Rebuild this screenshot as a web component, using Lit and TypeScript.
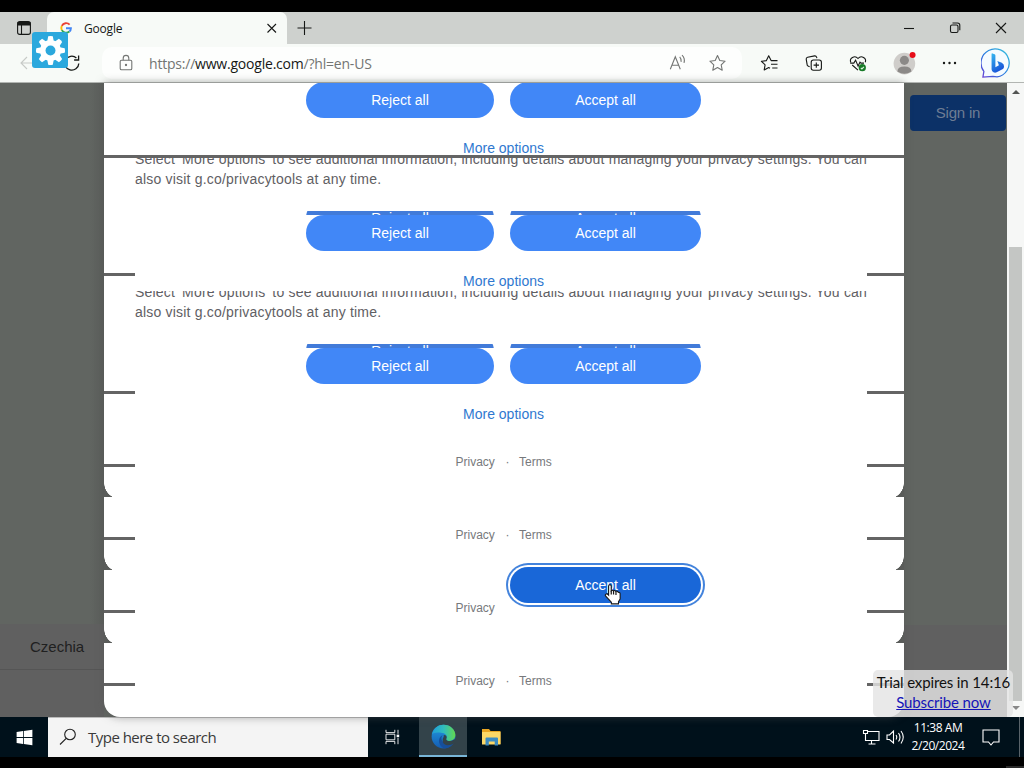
import { css, html, LitElement, svg } from "lit";
import { customElement, property } from "lit/decorators.js";
import { classMap } from "lit/directives/class-map.js";

@customElement("ui-icon")
export class UiIcon extends LitElement {
    @property({ type: String }) name = "";

    private shapes() {
        switch (this.name) {
            case "tabs":
                return svg`<rect x="3.6" y="3.6" width="12.8" height="12.8" rx="2.2"/><path d="M3.6 5h12.8M3.6 6.5h12.8" stroke-width="2.2"/><path d="M7.5 7v9.4"/>`;
            case "close":
                return svg`<path d="M5.500 6l8.500 8.500M14 6l-8.500 8.500"/>`;
            case "plus":
                return svg`<path d="M9.500 3v14M2.500 10h14"/>`;
            case "minimize":
                return svg`<path d="M5 10.5h10"/>`;
            case "restore":
                return svg`<rect x="5.5" y="7" width="7.5" height="7.5" rx="1.5"/><path d="M7.5 5h5q2.3 0 2.3 2.3v5"/>`;
            case "exit":
                return svg`<path d="M5 5l10 10M15 5L5 15"/>`;
            case "back":
                return svg`<path d="M17 10H3.5M9 4l-6 6 6 6"/>`;
            case "reload":
                return svg`<path d="M16.8 10.5a7 7 0 1 1-2.4-5.6M16.6 2.500v4.500h-4.500" stroke-width="1.3"/>`;
            case "lock":
                return svg`<rect x="4.2" y="7.2" width="11.6" height="9.6" rx="1.3"/><path d="M7.2 7.2V5.2a2.8 2.8 0 0 1 5.6 0v2"/><circle cx="10" cy="12" r=".6" fill="currentColor"/>`;
            case "read":
                return svg`<path d="M3.300 16.200L8.300 3.800l5 12.400M5.100 12.200h6.400M12.700 3.800q2 2.200 1.400 5M15 2.200q3.300 3 2 7.600"/>`;
            case "star":
                return svg`<path d="M10.500 2.600l2.300 4.900 5.300.7-3.900 3.700 1 5.300-4.700-2.600-4.700 2.600 1-5.300-3.900-3.700 5.300-.7z" stroke-linejoin="round"/>`;
            case "favorites":
                return svg`<path d="M12.2 7.6h-1.1L8.7 2.8 6.4 7.6l-5 .7 3.7 3.5-.9 5.1 4.5-2.4 1.3.7M11.2 7.6h6.3M11 11.3h6.5M12.2 15h5.3" stroke-linejoin="round"/>`;
            case "collections":
                return svg`<rect x="7.2" y="7" width="10.2" height="10.2" rx="2.2"/><path d="M12.3 9.4v5.4M9.6 12.1H15M5.6 13.8l-1.5-.8q-1-.6-1-1.6L2.2 6.2q-.2-1.6 1.4-2l7-1.3q1.5-.2 2 1.3l.3 1"/>`;
            case "health":
                return svg`<path d="M2.8 9.3C1 5.4 6.7 1.6 10 5.5c3.3-3.9 9-.1 7.2 3.8M2.2 10.100h3.600l1.800-3 2.500 6 1.900-4 1 1h3M4.200 12l5.800 5.200"/><circle cx="14.3" cy="14.7" r="3.6" fill="#187a28" stroke="none"/><path d="M12.8 14.900l1.100 1 2-2.100" stroke="#dff5df"/>`;
            case "dots":
                return svg`<g fill="currentColor" stroke="none"><circle cx="5" cy="10" r="1.2"/><circle cx="10.5" cy="10" r="1.2"/><circle cx="16" cy="10" r="1.2"/></g>`;
            case "profile":
                return svg`<g stroke="none"><circle cx="9.5" cy="10.5" r="9" fill="#cfcdca"/><circle cx="9.5" cy="7.8" r="3.8" fill="#8b8987"/><path d="M3.7 17q0-4 5.800-4t5.800 4q-5.800 4-11.600 0z" fill="#8b8987"/><circle cx="16.300" cy="3.400" r="2.500" fill="#e60d18"/></g>`;
            case "google":
                return svg`<g stroke-width="2.700"><path d="M15.200 5.200A7 7 0 0 0 4 6.900" stroke="#ea4335"/><path d="M4 6.900a7 7 0 0 0 0 6.200" stroke="#fbbc05"/><path d="M4 13.100a7 7 0 0 0 10.800 2" stroke="#34a853"/><path d="M14.800 15.100q2.200-1.900 2.200-4.800h-7" stroke="#4285f4"/></g>`;
            case "bing":
                return svg`<defs><linearGradient id="r" x1="0" y1="1" x2="1" y2="0"><stop stop-color="#6c3fd4"/><stop offset=".45" stop-color="#2878df"/><stop offset="1" stop-color="#38c4de"/></linearGradient><linearGradient id="b" x1="0" y1="0" x2=".5" y2="1"><stop stop-color="#37b8ef"/><stop offset="1" stop-color="#1853d8"/></linearGradient></defs>
                    <path d="M1.200 18.800l.6-3.500A8.800 8.800 0 1 1 10 18.700q-1.200 0-2.600-.3z" stroke="url(#r)" stroke-width=".8" fill="#f5fbff"/><path d="M6.600 4.500q0-.7.6-.5l1.300.5q.5.200.5.800v7.400l2.200-1.300-1-2.700 2.800 1.100q1.600.8 1.400 2.500 0 1-1 1.600l-3.600 1.900q-1 .5-2 0-1.200-.6-1.200-1.900z" fill="url(#b)" stroke="none"/>`;
            case "gear":
                return svg`<g stroke="none" fill="#fff"><circle cx="10" cy="10" r="6.400"/>${[0, 45, 90, 135, 180, 225, 270, 315].map(
                    (a) => svg`<path d="M8 4.500l.6-3.100q1.400-.4 2.800 0l.6 3.100z" transform="rotate(${a} 10 10)"/>`
                )}<circle cx="10" cy="10" r="3" fill="#2ba8dd"/></g>`;
            case "windows":
                return svg`<path d="M1.700 4.200l6.800-1v6.300H1.700zM9.300 3.100L18.300 1.800v7.700h-9zM1.700 10.400h6.800v6.400l-6.800-1zM9.300 10.400h9v7.800l-9-1.300z" fill="#fff" stroke="none"/>`;
            case "search":
                return svg`<circle cx="12" cy="7.500" r="5.300"/><path d="M8.200 11.300L2 17.500"/>`;
            case "taskview":
                return svg`<path d="M2.500 1v3.500h11V1M2.500 19v-3.500h11V19M2.500 6.500h11v7h-11zM17.500 1v5M17.500 11v8"/><path d="M15.800 7h3.200v3.200h-3.200z" fill="#fff" stroke="none"/>`;
            case "edge":
                return svg`<defs><linearGradient id="g" x1="0" y1=".3" x2="1" y2=".3"><stop stop-color="#209ed8"/><stop offset=".5" stop-color="#31bdbd"/><stop offset="1" stop-color="#62d84e"/></linearGradient><linearGradient id="u" x1="0" y1="0" x2="0" y2="1"><stop stop-color="#229be0"/><stop offset="1" stop-color="#145cb2"/></linearGradient></defs>
                    <g stroke="none"><circle cx="10" cy="10" r="9.500" fill="url(#u)"/><path d="M.8 8.200C2.200 3 6 .5 10 .5c5.500 0 9.500 4 9.500 8.200 0 3-2.500 4.800-5 4.800-2 0-3-.8-2.400-1.800C13.500 9.500 11.500 7 8 7 4.500 6.400 2 7 .8 8.200z" fill="url(#g)"/><path d="M9.300 8.800c-2.500 3.200.2 7 3.700 7 2 0 3.800-.7 5.300-1.900l.5.200q-3 5-8 5.400C6 18 4.500 11.500 9.300 8.800z" fill="#164f9c"/><path d="M10.200 8.700q2.600.2 2.300 2.200-.8 1.400.3 2.200 2.600 1.300 5.700-.8l1.500-.8v4l-1.600.100q-2.700 1.500-5.500 1.300-3-.4-3.500-3-.2-2.500.8-4z" fill="#33434a"/></g>`;
            case "folder":
                return svg`<g stroke="none"><path d="M.5 2h7l1.500 2h10V17H.5z" fill="#e9a623"/><path d="M.5 5h18.500v12.500H.5z" fill="#fcd867"/><path d="M4 18.500V11.500q0-1 1-1h10.500q1 0 1 1v7h-3.300v-4H7.300v4z" fill="#3c8cc2"/></g>`;
            case "network":
                return svg`<path d="M6 4.500h12v9H4.500V8.500M10.500 13.500v3M7.500 17h7M2.500 3.500h4v3h-4zM4.500 6.500v2"/>`;
            case "sound":
                return svg`<path d="M2 8h2.500L8.500 4v12L4.500 12.500H2zM11 8q1.500 2 0 4.500M13.500 6q3 4.200 0 8.500M16 4q4.500 6 0 12.500"/>`;
            case "message":
                return svg`<path d="M2 3h16v12h-5.500L10 18l-2.500-3H2z"/>`;
            case "hand":
                return svg`<path d="M6 11V3q0-1.400 1.200-1.400T8.400 3v4q1-.9 2 .1 1.200-.8 2.100.5 1.600-.6 2.300.9 1.700-.3 1.700 1.700v4.300L15 17v2H8.500v-1.500L3.400 12q-.9-1.300.2-1.900T6 11z" fill="#fff" stroke="#161616" stroke-width="1"/><path d="M8.400 7v3.500M10.500 7.200v3.300M12.700 7.800v3" stroke="#161616"/>`;
        }
        return "";
    }

    render() {
        return html`<svg viewBox="0 0 20 20" fill="none" stroke="currentColor" stroke-width="1.1">${this.shapes()}</svg>`;
    }

    static styles = css`
        :host {
            display: block;
            flex: none;
            width: 20px;
            height: 20px;
        }

        svg {
            display: block;
            width: 100%;
            height: 100%;
        }
    `;
}

@customElement("consent-slice")
export class ConsentSlice extends LitElement {
    @property({ type: String }) kind = "plain";
    @property({ type: Boolean }) terms = true;

    private buttons() {
        return html`<div class="buttons">
            <button class="btn reject">Reject all</button>
            <button class="btn accept">Accept all</button>
        </div>`;
    }

    private footer() {
        return html`<div class="footer">
            <span class="privacy">Privacy</span>
            ${this.terms ? html`<span class="sep">·</span><span>Terms</span>` : ""}
        </div>`;
    }

    private body() {
        if (this.kind === "top") {
            return html`${this.buttons()}<a class="more">More options</a>`;
        }
        if (this.kind === "plain") {
            return this.footer();
        }
        return html`
            <div class="cut"><p class="first">Select 'More options' to see additional information, including details about managing your privacy settings. You can</p></div>
            <p class="second">also visit g.co/privacytools at any time.</p>
            <div class="strip">${this.buttons()}</div>
            ${this.buttons()}
            <a class="more">More options</a>
            ${this.kind === "last" ? this.footer() : ""}
        `;
    }

    render() {
        const side = html`<div class="side">
            ${this.kind === "top" ? "" : html`<i class="tick"></i>`}
            ${this.kind === "last" ? html`<i class="tick low"></i>` : ""}
        </div>`;
        return html`<div class=${classMap({ slice: true, [this.kind]: true })}>
            ${side}
            <div class="body">${this.body()}</div>
            ${side}
        </div>`;
    }

    static styles = css`
        :host {
            display: block;
            flex: none;
        }

        .slice {
            display: grid;
            grid-template-columns: 31px 732px 37px;
            height: 73px;
            overflow: hidden;
        }

        .top {
            height: 72px;
            border-bottom: 3px solid #646464;
        }

        .middle {
            height: 133px;
        }

        .last {
            height: 206px;
        }

        .side {
            display: flex;
            flex-direction: column;
        }

        .tick {
            height: 3px;
            margin-top: 40px;
            background: #646464;
        }

        .middle .tick {
            margin-top: 115px;
        }

        .last .tick {
            margin-top: 100px;
        }

        .last .tick.low {
            margin-top: 70px;
        }

        .body {
            display: flex;
            flex-direction: column;
            align-items: center;
            font: 14px/20px "Liberation Sans", Arial, sans-serif;
            color: #5f6064;
            min-width: 0;
        }

        .cut {
            display: flex;
            align-items: flex-end;
            align-self: stretch;
            height: 11px;
            overflow: hidden;
        }

        p {
            margin: 0;
            align-self: stretch;
            white-space: nowrap;
            letter-spacing: 0.2px;
        }

        .cut .first {
            flex: none;
            align-self: flex-end;
            height: 20px;
        }

        .second {
            height: 42px;
        }

        .buttons {
            display: flex;
            gap: 16px;
            width: 395px;
            margin-left: 5px;
        }

        .btn {
            height: 36px;
            padding: 0;
            border: 0;
            border-radius: 18px;
            background: #4187f7;
            color: #fff;
            font: inherit;
        }

        .reject {
            width: 188px;
        }

        .accept {
            width: 191px;
        }

        .top .buttons {
            margin-top: -1px;
        }

        .strip {
            display: flex;
            height: 4px;
            overflow: hidden;
        }

        .strip .buttons {
            margin-top: -11px;
        }

        .strip .btn {
            background: #427bd9;
        }

        .more {
            margin: 20px 0 0 5px;
            color: #2f78d0;
        }

        .footer {
            display: flex;
            width: 97px;
            margin: 28px 0 0 6px;
            font-size: 12px;
            color: #77797c;
        }

        .privacy {
            width: 50px;
        }

        .sep {
            width: 13.5px;
        }
    `;
}

@customElement("app-root")
export class AppRoot extends LitElement {
    render() {
        return html`
            <div class="screen">
                <div class="tabbar">
                    <ui-icon class="tabs" name="tabs"></ui-icon>
                    <div class="tab">
                        <ui-icon class="favicon" name="google"></ui-icon>
                        <span class="tab-title">Google</span>
                        <ui-icon name="close"></ui-icon>
                    </div>
                    <ui-icon class="new-tab" name="plus"></ui-icon>
                    <div class="window-buttons">
                        <ui-icon name="minimize"></ui-icon>
                        <ui-icon name="restore"></ui-icon>
                        <ui-icon name="exit"></ui-icon>
                    </div>
                </div>
                <div class="toolbar">
                    <ui-icon class="back" name="back"></ui-icon>
                    <ui-icon class="reload" name="reload"></ui-icon>
                    <div class="address">
                        <ui-icon name="lock"></ui-icon>
                        <span class="url">https://<b>www.google.com</b>/?hl=en-US</span>
                        <ui-icon class="read" name="read"></ui-icon>
                        <ui-icon name="star"></ui-icon>
                    </div>
                    <div class="actions">
                        <ui-icon name="favorites"></ui-icon>
                        <ui-icon name="collections"></ui-icon>
                        <ui-icon name="health"></ui-icon>
                        <ui-icon class="profile" name="profile"></ui-icon>
                        <ui-icon class="dots" name="dots"></ui-icon>
                        <ui-icon class="bing" name="bing"></ui-icon>
                    </div>
                </div>
                <div class="page">
                    <div class="left">
                        <div class="country">Czechia</div>
                        <div class="links"></div>
                    </div>
                    <div class="dialog">
                        <consent-slice kind="top"></consent-slice>
                        <consent-slice kind="middle"></consent-slice>
                        <consent-slice class="corners" kind="last"></consent-slice>
                        <consent-slice class="corners"></consent-slice>
                        <consent-slice class="corners" .terms=${false}></consent-slice>
                        <consent-slice></consent-slice>
                        <button class="accept-hover">Accept all</button>
                        <ui-icon class="hand" name="hand"></ui-icon>
                    </div>
                    <div class="right">
                        <div class="sign-in">Sign in</div>
                        <div class="right-foot"></div>
                    </div>
                    <div class="scrollbar">
                        <i class="arrow up"></i>
                        <i class="thumb"></i>
                        <i class="arrow down"></i>
                    </div>
                </div>
                <div class="taskbar">
                    <div class="start"><ui-icon name="windows"></ui-icon></div>
                    <div class="search">
                        <ui-icon name="search"></ui-icon>
                        <span>Type here to search</span>
                    </div>
                    <div class="task"><ui-icon class="taskview" name="taskview"></ui-icon></div>
                    <div class="task active"><ui-icon class="edge" name="edge"></ui-icon></div>
                    <div class="task"><ui-icon class="folder" name="folder"></ui-icon></div>
                    <div class="tray">
                        <ui-icon name="network"></ui-icon>
                        <ui-icon name="sound"></ui-icon>
                        <div class="clock"><span>11:38 AM</span><span>2/20/2024</span></div>
                        <ui-icon class="message" name="message"></ui-icon>
                        <i class="peek"></i>
                    </div>
                </div>
                <div class="settings"><ui-icon name="gear"></ui-icon></div>
                <div class="trial">
                    <span>Trial expires in 14:16</span>
                    <a>Subscribe now</a>
                </div>
                <i class="notch"></i>
            </div>
        `;
    }

    static styles = css`
        :host {
            display: block;
        }

        .screen {
            position: relative;
            display: flex;
            flex-direction: column;
            box-sizing: border-box;
            width: 1024px;
            height: 768px;
            padding: 12px 0 11px;
            overflow: hidden;
            background: #000;
            font-family: "Open Sans", "Noto Sans", sans-serif;
            color: #161816;
        }

        .tabbar {
            display: flex;
            align-items: center;
            height: 32px;
            background: #ced1ce;
        }

        .tabs {
            margin: 0 13px 0 14px;
        }

        .tab {
            display: flex;
            align-items: center;
            box-sizing: border-box;
            width: 240px;
            height: 32px;
            padding: 0 5px 0 12px;
            border-radius: 7px 7px 0 0;
            background: #f7faf7;
            font-size: 12px;
        }

        .favicon {
            width: 14px;
            height: 14px;
        }

        .tab-title {
            flex: 1;
            margin-left: 11px;
            letter-spacing: -0.2px;
        }

        .new-tab {
            margin-left: 8px;
        }

        .window-buttons {
            display: flex;
            gap: 26px;
            margin: 0 13px 0 auto;
        }

        .toolbar {
            display: flex;
            align-items: center;
            height: 38px;
            background: #f7faf7;
            border-bottom: 1px solid #b2b5b2;
        }

        .back {
            margin-left: 18px;
            color: #c7cac7;
        }

        .reload {
            margin-left: 24px;
        }

        .address {
            display: flex;
            align-items: center;
            box-sizing: border-box;
            width: 640px;
            height: 32px;
            margin-left: 20px;
            padding: 0 15px 0 14px;
            border-radius: 10px;
            background: #fdfefd;
            color: #737573;
        }

        .url {
            flex: 1;
            margin-left: 13px;
            font-size: 14px;
            letter-spacing: -0.21px;
            white-space: nowrap;
        }

        .url b {
            font-weight: 400;
            color: #161816;
        }

        .read {
            margin-right: 20px;
        }

        .actions {
            display: flex;
            align-items: center;
            gap: 24px;
            margin-left: 18px;
        }

        .profile {
            width: 24px;
            height: 24px;
            margin-left: 1px;
        }

        .dots {
            margin-left: -2px;
        }

        .bing {
            width: 32px;
            height: 32px;
            margin-left: -2px;
        }

        .page {
            display: flex;
            height: 634px;
            background: #616561;
        }

        .left {
            display: flex;
            flex-direction: column;
            justify-content: flex-end;
            width: 104px;
            background: linear-gradient(90deg, transparent 90px, #5b5e5b);
        }

        .country {
            height: 45px;
            padding-left: 30px;
            background: #606060;
            border-bottom: 1px solid #555;
            font: 15px/45px "Liberation Sans", Arial, sans-serif;
            color: #202020;
        }

        .links {
            height: 47px;
            background: #606060;
        }

        .dialog {
            position: relative;
            display: flex;
            flex-direction: column;
            width: 800px;
            border-radius: 0 0 16px 16px;
            background: #fff;
            box-shadow: 0 0 8px #5558;
        }

        .corners {
            background:
                radial-gradient(circle at 16px 0, transparent 15.5px, #5a5c5a 16px) left bottom / 11px 14px no-repeat,
                radial-gradient(circle at -5px 0, transparent 15.5px, #5a5c5a 16px) right bottom / 11px 14px no-repeat;
        }

        .accept-hover {
            position: absolute;
            left: 406px;
            top: 484px;
            width: 191px;
            height: 36px;
            padding: 0;
            border: 0;
            border-radius: 18px;
            background: #1967d8;
            box-shadow: 0 0 0 2px #fff, 0 0 0 4px #4383dc;
            color: #fff;
            font: 14px "Liberation Sans", Arial, sans-serif;
        }

        .hand {
            position: absolute;
            left: 498px;
            top: 499px;
            width: 22px;
            height: 24px;
        }

        .right {
            display: flex;
            flex-direction: column;
            justify-content: space-between;
            width: 103px;
        }

        .sign-in {
            width: 96px;
            height: 36px;
            margin: 12px 0 0 6px;
            border-radius: 4px;
            background: #0c3167;
            color: #6e7d94;
            font: 15px/36px "Liberation Sans", Arial, sans-serif;
            letter-spacing: -0.2px;
            text-align: center;
        }

        .right-foot {
            height: 92px;
            background: #606060;
        }

        .scrollbar {
            display: flex;
            flex-direction: column;
            align-items: center;
            width: 17px;
            background: #f6f7f6;
        }

        .thumb {
            width: 13px;
            height: 454px;
            margin: 153px 0 5px;
            background: #c4c6c4;
        }

        .arrow {
            border: 4px solid transparent;
        }

        .up {
            height: 0;
            margin-top: 7px;
            border-top: 0;
            border-bottom: 4px solid #535553;
        }

        .down {
            border-bottom: 0;
            border-top: 4px solid #888;
        }

        .taskbar {
            display: flex;
            height: 40px;
            background: #00111b;
            color: #fff;
        }

        .start,
        .task {
            display: flex;
            align-items: center;
            justify-content: center;
            width: 48px;
        }

        .start ui-icon {
            width: 19px;
            height: 19px;
        }

        .search {
            display: flex;
            align-items: center;
            box-sizing: border-box;
            width: 320px;
            padding: 0 0 1px 10px;
            border-top: 1px solid #bbb;
            background: #f4f4f4;
            color: #3a3a3a;
            font-size: 15px;
            letter-spacing: -0.52px;
        }

        .search span {
            margin-left: 10px;
        }

        .search ui-icon {
            color: #202020;
        }

        .taskview {
            width: 18px;
            height: 16px;
        }

        .active {
            box-sizing: border-box;
            margin-left: 3px;
            background: #33434a;
            border-bottom: 2px solid #79b6d8;
        }

        .edge {
            width: 25px;
            height: 25px;
        }

        .folder {
            width: 23px;
            height: 20px;
        }

        .tray {
            display: flex;
            align-items: center;
            margin-left: auto;
        }

        .tray ui-icon {
            margin-right: 4px;
        }

        .clock {
            display: flex;
            flex-direction: column;
            align-items: center;
            width: 58px;
            margin-right: 14px;
            font-size: 12px;
            line-height: 18px;
            letter-spacing: -0.45px;
            white-space: nowrap;
        }

        .tray .message {
            margin-right: 18px;
        }

        .peek {
            width: 1px;
            height: 40px;
            margin-right: 4px;
            background: #59636a;
        }

        .settings {
            position: absolute;
            left: 32px;
            top: 32px;
            display: grid;
            place-items: center;
            width: 36px;
            height: 36px;
            border-radius: 3px;
            background: #2ba8dd;
        }

        .settings ui-icon {
            width: 33px;
            height: 33px;
        }

        .trial {
            position: absolute;
            left: 873px;
            top: 670px;
            display: flex;
            flex-direction: column;
            align-items: center;
            width: 140px;
            height: 47px;
            border-radius: 5px;
            background: #e4e4e4d0;
            color: #111;
            font: 15px/20px Lato, sans-serif;
            letter-spacing: -0.13px;
            white-space: nowrap;
            padding: 2px 0 0 1px;
            box-sizing: border-box;
        }

        .trial a {
            color: #1414b8;
            text-decoration: underline;
        }

        .notch {
            position: absolute;
            right: 0;
            bottom: 0;
            width: 18px;
            height: 2px;
            background: #2a2a2a;
        }
    `;
}
